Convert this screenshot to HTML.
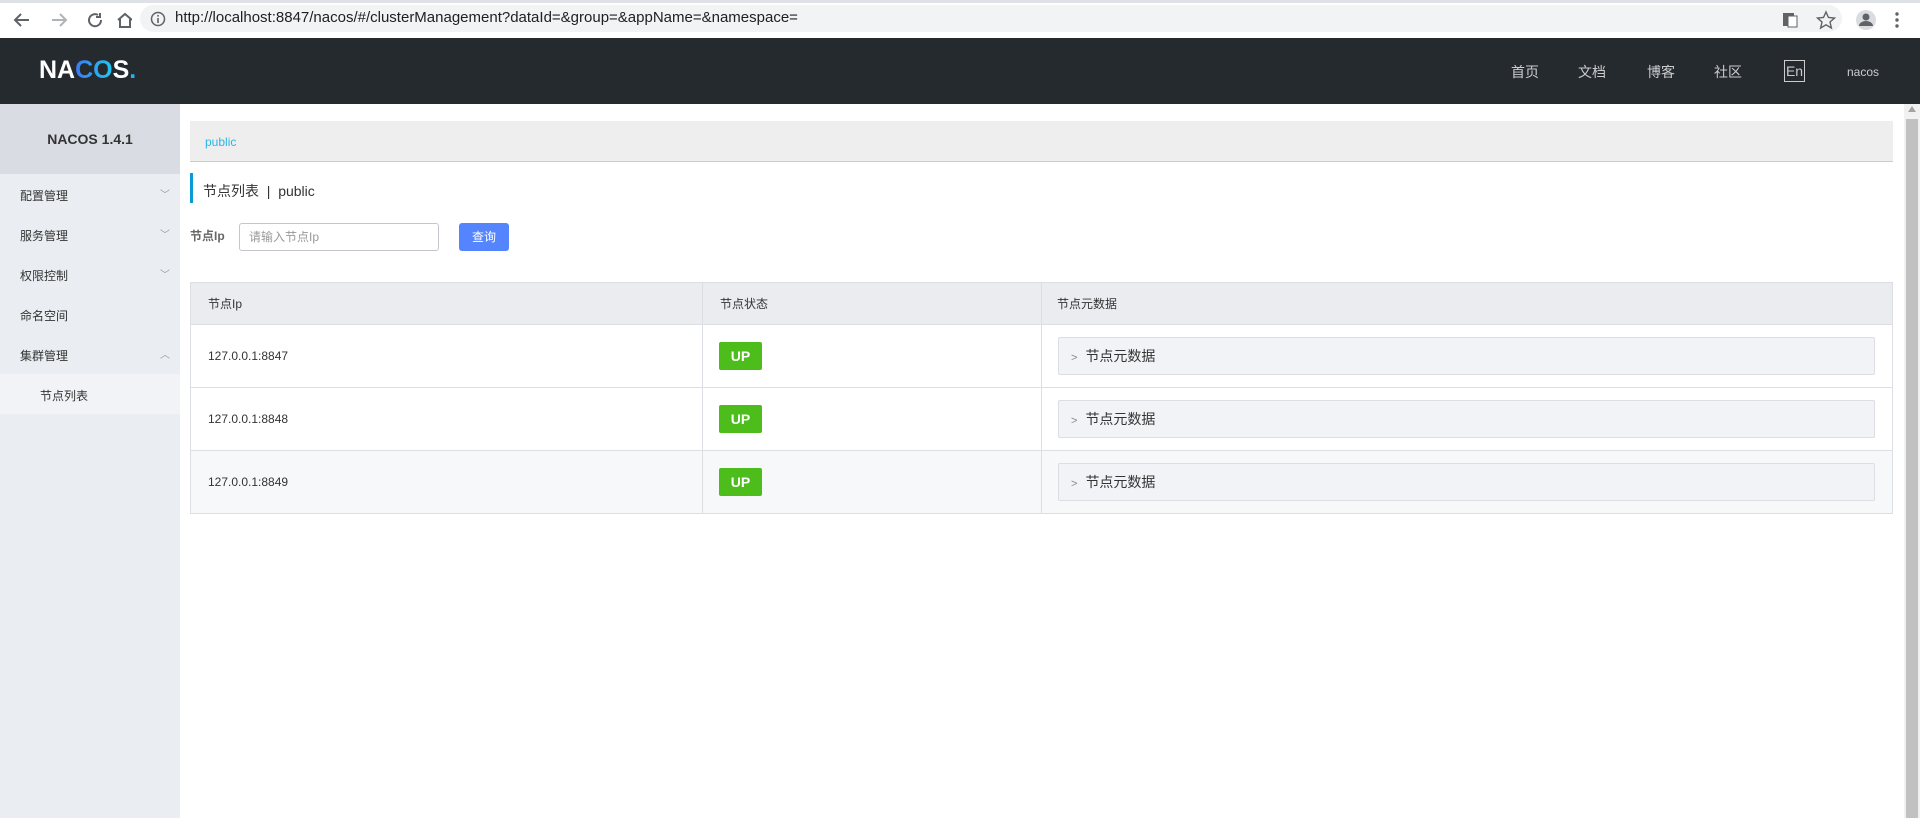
<!DOCTYPE html>
<html><head><meta charset="utf-8"><style>
*{margin:0;padding:0;box-sizing:border-box}
body{width:1920px;height:818px;overflow:hidden;background:#fff;font-family:"Liberation Sans","Noto Sans CJK SC",sans-serif;position:relative;color:#333}
.abs{position:absolute}
.chrome{left:0;top:0;width:1920px;height:38px;background:#fff;border-top:3px solid #dee1e6}
.pill{left:140px;top:5px;width:1702px;height:27px;background:#f1f3f4;border-radius:14px}
.url{left:175px;top:8px;font-size:15px;color:#202124;line-height:20px}
.hdr{left:0;top:38px;width:1920px;height:66px;background:#252a2f}
.logo{left:39px;top:55px;font-size:25px;font-weight:bold;color:#fff;letter-spacing:0px;line-height:30px}
.nav{top:62px;font-size:14px;color:#ccc;line-height:20px}
.side{left:0;top:104px;width:180px;height:714px;background:#eaedf1}
.stitle{left:0;top:104px;width:180px;height:70px;background:#d9dde3;text-align:center;line-height:70px;font-weight:bold;font-size:14px;color:#333}
.mi{left:20px;font-size:12px;color:#333;line-height:16px}
.arr{left:160px;font-size:10px;color:#999}
.sub{left:0;top:374px;width:180px;height:40px;background:#f2f3f6}
.bc{left:190px;top:121px;width:1703px;height:41px;background:#eee;border-bottom:1px solid #ccc}
.sb{left:1904px;top:104px;width:16px;height:714px;background:#f1f1f1}
.thumb{left:1906px;top:119px;width:12px;height:699px;background:#c1c1c1}
table{position:absolute;left:190px;top:282px;width:1703px;border-collapse:collapse;font-size:12px}
td,th{border:1px solid #dcdee3;text-align:left;font-weight:normal;padding-left:17px}
th{height:42px;background:#ebecf0;color:#333}
td{height:63px}
.up{display:inline-block;width:43px;height:28px;background:#4dbd1b;color:#fff;font-weight:bold;font-size:14px;text-align:center;line-height:28px;border-radius:2px}
.box{height:38px;margin-right:17px;background:#f2f3f7;border:1px solid #dcdee3;font-size:14px;line-height:36px;padding-left:12px;color:#333;border-radius:2px}
</style></head><body>
<div class="abs chrome"></div>
<svg class="abs" style="left:12px;top:10px" width="120" height="20" viewBox="0 0 120 20">
<path d="M17 10H4M9 4L3 10l6 6" stroke="#5f6368" stroke-width="2" fill="none"/>
<path d="M40 10h13M48 4l6 6-6 6" stroke="#b0b3b7" stroke-width="2" fill="none"/>
<path d="M86 5a6 6 0 1 0 3 5M88 3v4h-4" stroke="#5f6368" stroke-width="2" fill="none"/>
<path d="M106 10l7-6 7 6M108 9v8h10V9" stroke="#5f6368" stroke-width="2" fill="none"/>
</svg>
<div class="abs pill"></div>
<svg class="abs" style="left:150px;top:11px" width="16" height="16"><circle cx="8" cy="8" r="6.5" stroke="#5f6368" stroke-width="1.5" fill="none"/><rect x="7.2" y="7" width="1.6" height="5" fill="#5f6368"/><rect x="7.2" y="4" width="1.6" height="1.6" fill="#5f6368"/></svg>
<div class="abs url">http://localhost:8847/nacos/#/clusterManagement?dataId=&amp;group=&amp;appName=&amp;namespace=</div>
<svg class="abs" style="left:1780px;top:10px" width="135" height="20">
<rect x="3" y="3" width="11" height="13" fill="#5f6368"/><rect x="8" y="6" width="9" height="11" fill="#fff" stroke="#5f6368"/>
<path d="M46 2l2.5 5.5 6 .5-4.5 4 1.4 6-5.4-3.2-5.4 3.2 1.4-6-4.5-4 6-.5z" stroke="#5f6368" stroke-width="1.4" fill="none"/>
<circle cx="86" cy="10" r="10" fill="#dadce0"/><circle cx="86" cy="7" r="3.5" fill="#5f6368"/><path d="M79 16a7 5 0 0 1 14 0z" fill="#5f6368"/>
<circle cx="117" cy="4" r="1.7" fill="#5f6368"/><circle cx="117" cy="10" r="1.7" fill="#5f6368"/><circle cx="117" cy="16" r="1.7" fill="#5f6368"/>
</svg>
<div class="abs hdr"></div>
<div class="abs logo">NA<span style="background:linear-gradient(90deg,#3b7af5,#20c8f0);-webkit-background-clip:text;color:transparent">CO</span>S<span style="color:#1fb6f0">.</span></div>
<div class="abs nav" style="left:1511px">首页</div>
<div class="abs nav" style="left:1578px">文档</div>
<div class="abs nav" style="left:1647px">博客</div>
<div class="abs nav" style="left:1714px">社区</div>
<div class="abs nav" style="left:1784px;top:60px;width:21px;height:22px;border:1px solid #ccc;text-align:center;line-height:20px">En</div>
<div class="abs nav" style="left:1847px;font-size:12px">nacos</div>
<div class="abs side"></div>
<div class="abs stitle">NACOS 1.4.1</div>
<div class="abs mi" style="top:188px">配置管理</div><div class="abs arr" style="top:186px">﹀</div>
<div class="abs mi" style="top:228px">服务管理</div><div class="abs arr" style="top:226px">﹀</div>
<div class="abs mi" style="top:268px">权限控制</div><div class="abs arr" style="top:266px">﹀</div>
<div class="abs mi" style="top:308px">命名空间</div>
<div class="abs mi" style="top:348px">集群管理</div><div class="abs arr" style="top:346px">︿</div>
<div class="abs sub"></div>
<div class="abs mi" style="top:388px;left:40px">节点列表</div>
<div class="abs bc"></div>
<div class="abs" style="left:205px;top:135px;font-size:12px;color:#29b6e6">public</div>
<div class="abs" style="left:190px;top:173px;width:3px;height:30px;background:#0a9bd6"></div>
<div class="abs" style="left:203px;top:181px;font-size:14px;color:#333">节点列表 &nbsp;|&nbsp; public</div>
<div class="abs" style="left:190px;top:227px;font-size:12px;font-weight:bold;color:#666">节点Ip</div>
<div class="abs" style="left:239px;top:223px;width:200px;height:28px;border:1px solid #c4c6cf;border-radius:3px;font-size:12px;color:#999;padding-left:9px;line-height:26px">请输入节点Ip</div>
<div class="abs" style="left:459px;top:223px;width:50px;height:28px;background:#5584ff;border-radius:3px;color:#fff;font-size:12px;text-align:center;line-height:28px">查询</div>
<table>
<tr><th style="width:512px">节点Ip</th><th style="width:339px">节点状态</th><th style="padding-left:15px">节点元数据</th></tr>
<tr><td>127.0.0.1:8847</td><td style="padding-left:16px"><span class="up">UP</span></td><td style="padding-left:16px"><div class="box"><span style="color:#888;font-size:11px;margin-right:8px">&gt;</span>节点元数据</div></td></tr>
<tr><td>127.0.0.1:8848</td><td style="padding-left:16px"><span class="up">UP</span></td><td style="padding-left:16px"><div class="box"><span style="color:#888;font-size:11px;margin-right:8px">&gt;</span>节点元数据</div></td></tr>
<tr style="background:#f7f8fa"><td>127.0.0.1:8849</td><td style="padding-left:16px"><span class="up">UP</span></td><td style="padding-left:16px"><div class="box"><span style="color:#888;font-size:11px;margin-right:8px">&gt;</span>节点元数据</div></td></tr>
</table>
<div class="abs sb"></div>
<div class="abs thumb"></div>
<div class="abs" style="left:1908px;top:106px;width:0;height:0;border-left:4px solid transparent;border-right:4px solid transparent;border-bottom:6px solid #a3a3a3"></div>
</body></html>
